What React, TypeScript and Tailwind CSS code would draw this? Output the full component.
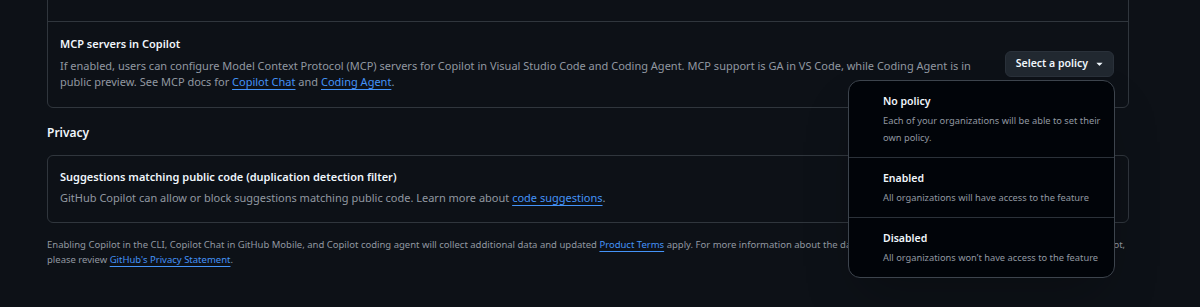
const policies = [
  { id: 'none', title: 'No policy', note: 'Each of your organizations will be able to set their own policy.' },
  { id: 'enabled', title: 'Enabled', note: 'All organizations will have access to the feature' },
  { id: 'disabled', title: 'Disabled', note: 'All organizations won\u2019t have access to the feature' },
];

function Caret() {
  return (
    <svg width="13" height="13" viewBox="0 0 16 16" fill="currentColor" aria-hidden="true">
      <path d="m4.427 7.427 3.396 3.396a.25.25 0 0 0 .354 0l3.396-3.396A.25.25 0 0 0 11.396 7H4.604a.25.25 0 0 0-.177.427Z" />
    </svg>
  );
}

function PolicyMenu() {
  return (
    <div className="absolute right-[-1px] top-[calc(100%+3px)] z-10 w-[267px] rounded-xl border border-[#3d444d] bg-[#010409] shadow-2xl">
      {policies.map((p, i) => (
        <div
          key={p.id}
          className={`pl-[34px] pr-3 pt-[10px] pb-[11px] ${i > 0 ? 'border-t border-[#2b3139]' : ''}`}
        >
          <div className="text-[10.5px] font-semibold leading-[21px] text-[#f0f6fc]">{p.title}</div>
          <div className="text-[9.3px] leading-[17px] text-[#9198a1]">{p.note}</div>
        </div>
      ))}
    </div>
  );
}

function A({ children }: { children: React.ReactNode }) {
  return (
    <a href="#" className="text-[#4493f8] underline underline-offset-[3px]">
      {children}
    </a>
  );
}

export default function App() {
  return (
    <div className="min-h-screen overflow-hidden bg-[#0d1117] font-['Noto_Sans',sans-serif]">
      <div className="ml-[47px] -mt-[49px] w-[1082px]">
        <div className="rounded-md border border-[#30363d]">
          {/* row above the fold, only its bottom edge shows */}
          <div className="px-3 pt-3 pb-[21px]">
            <div className="text-[11px] font-semibold leading-5 text-[#f0f6fc]">Copilot Chat in GitHub.com</div>
            <div className="text-[11px] leading-4 text-[#9198a1]">
              You can use Copilot Chat in GitHub.com (preview) to explain code, get help with pull requests, and ask about repositories you have access to.
            </div>
          </div>

          <div className="flex items-center justify-between border-t border-[#30363d] pl-3 pr-[14px] pt-3 pb-[17px]">
            <div>
              <div className="text-[11px] font-semibold leading-5 text-[#f0f6fc]">MCP servers in Copilot</div>
              <p className="mt-1 text-[11px] leading-4 text-[#9198a1]">
                If enabled, users can configure Model Context Protocol (MCP) servers for Copilot in Visual Studio Code and Coding Agent. MCP support is GA in VS Code, while Coding Agent is in
                <br />
                public preview. See MCP docs for <A>Copilot Chat</A> and <A>Coding Agent</A>.
              </p>
            </div>
            <div className="relative mt-[3px]">
              <button className="flex h-[26px] items-center gap-[5px] rounded-md border border-[#2a313a] bg-[#212830] pl-[10px] pr-[7px] text-[10.5px] font-semibold text-[#f0f6fc]">
                Select a policy
                <Caret />
              </button>
              <PolicyMenu />
            </div>
          </div>
        </div>

        <h2 className="mt-[13px] mb-[10px] text-[12px] font-semibold leading-6 text-[#f0f6fc]">Privacy</h2>

        <div className="rounded-md border border-[#30363d] pl-3 pr-[14px] pt-[11px] pb-4">
          <div className="text-[11px] font-semibold leading-5 text-[#f0f6fc]">
            Suggestions matching public code (duplication detection filter)
          </div>
          <p className="mt-[3px] text-[11px] leading-4 text-[#9198a1]">
            GitHub Copilot can allow or block suggestions matching public code. Learn more about <A>code suggestions</A>.
          </p>
        </div>

        <p className="mt-[14px] text-[9.5px] leading-[15px] text-[#9198a1]">
          <span className="whitespace-nowrap">
            Enabling Copilot in the CLI, Copilot Chat in GitHub Mobile, and Copilot coding agent will collect additional data and updated <A>Product Terms</A> apply. For more information about the data collection, processing, and retention within GitHub Copilot,
          </span>
          <br />
          please review <A>GitHub's Privacy Statement</A>.
        </p>
      </div>
    </div>
  );
}
